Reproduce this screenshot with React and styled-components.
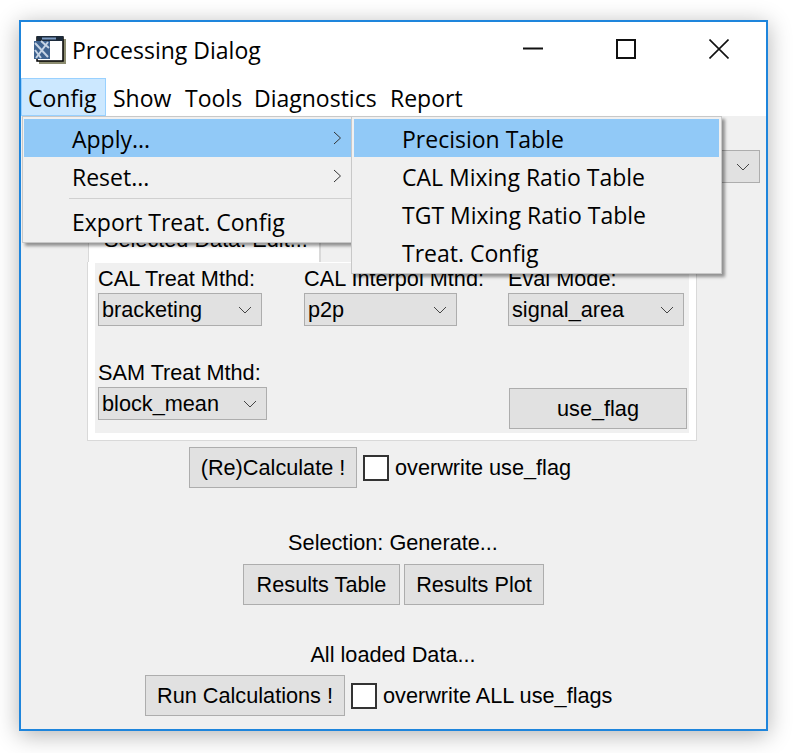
import styled, { createGlobalStyle } from 'styled-components';

const GlobalStyle = createGlobalStyle`
  html, body {
    margin: 0;
    padding: 0;
    background: #fff;
    min-height: 753px;
  }

  body {
    overflow: hidden;
  }
`;

const Chevron = ({ size = 14 }) => (
  <ChevronSvg width={size} height={size} viewBox="0 0 14 14" fill="none" stroke="#444" strokeWidth="1">
    <path d="M1 4l6 6 6-6" />
  </ChevronSvg>
);

const ArrowRight = () => (
  <svg width="9" height="14" viewBox="0 0 9 14" fill="none" stroke="#333" strokeWidth="1" display="block">
    <path d="M1 1l6.500 6-6.500 6" />
  </svg>
);

const AppIcon = () => (
  <svg width="32" height="28" viewBox="0 0 32 28">
    <rect x="5" y="3" width="27" height="25" fill="#8c8c70" />
    <rect x="3" y="1" width="26" height="24" fill="#fff" stroke="#000" strokeWidth="1.500" />
    <rect x="3" y="0" width="26" height="5" fill="#1c2a3a" />
    <rect x="8" y="1.500" width="14" height="2" fill="#7d9cc4" />
    <rect x="0" y="5" width="16" height="18" fill="#3f6390" />
    <path d="M1 7l13 14M14 6L2 22M7 5l8 7M1 14l6 8" stroke="#c5d3e4" strokeWidth="2" fill="none" />
  </svg>
);

const TitleBar = () => (
  <Title>
    <AppIcon />
    <TitleText>Processing Dialog</TitleText>
    <WinButtons>
      <WinButton>
        <svg width="20" height="20" viewBox="0 0 20 20"><path d="M0 9.500h20" stroke="#111" strokeWidth="2" /></svg>
      </WinButton>
      <WinButton>
        <svg width="20" height="20" viewBox="0 0 20 20"><rect x="1" y="1" width="18" height="18" fill="none" stroke="#111" strokeWidth="2" /></svg>
      </WinButton>
      <WinButton>
        <svg width="20" height="20" viewBox="0 0 20 20"><path d="M0.500 0.500l19 19M19.500 0.500l-19 19" stroke="#111" strokeWidth="1.600" fill="none" /></svg>
      </WinButton>
    </WinButtons>
  </Title>
);

const Menus = () => (
  <DropMenu>
    <MenuRow $active>
      Apply...
      <RowArrow><ArrowRight /></RowArrow>
    </MenuRow>
    <MenuRow>
      Reset...
      <RowArrow><ArrowRight /></RowArrow>
    </MenuRow>
    <MenuSep />
    <MenuRow>Export Treat. Config</MenuRow>
    <SubMenu>
      <SubRow $active>Precision Table</SubRow>
      <SubRow>CAL Mixing Ratio Table</SubRow>
      <SubRow>TGT Mixing Ratio Table</SubRow>
      <SubRow>Treat. Config</SubRow>
    </SubMenu>
  </DropMenu>
);

const Combo = ({ value, width }) => (
  <ComboBox $width={width}>
    {value}
    <Chevron />
  </ComboBox>
);

export default function App() {
  return (
    <>
      <GlobalStyle />
      <Window>
        <TitleBar />
        <MenuBar>
          <MenuItem $open $w={85} $pad={6}>Config</MenuItem>
          <MenuItem $w={78} $pad={6}>Show</MenuItem>
          <MenuItem $w={69} $pad={0}>Tools</MenuItem>
          <MenuItem $w={136} $pad={0}>Diagnostics</MenuItem>
          <MenuItem $w={90} $pad={0}>Report</MenuItem>
          <Menus />
        </MenuBar>
        <Body>
          <TopRow>
            <Combo value="" width={200} />
          </TopRow>
          <TabBar>
            <Tab $selected>Selected Data: Edit...</Tab>
            <Tab />
          </TabBar>
          <TabFrame>
            <TabInner>
              <Field $col="1" $row="1">
                <Label>CAL Treat Mthd:</Label>
                <Combo value="bracketing" width={164} />
              </Field>
              <Field $col="2" $row="1">
                <Label>CAL Interpol Mthd:</Label>
                <Combo value="p2p" width={153} />
              </Field>
              <Field $col="3" $row="1">
                <Label>Eval Mode:</Label>
                <Combo value="signal_area" width={176} />
              </Field>
              <Field $col="1" $row="2">
                <Label>SAM Treat Mthd:</Label>
                <Combo value="block_mean" width={169} />
              </Field>
              <UseFlag>use_flag</UseFlag>
            </TabInner>
          </TabFrame>
          <ActionRow $top={6} $left={168}>
            <Button $width={168}>(Re)Calculate !</Button>
            <Check />
            <span>overwrite use_flag</span>
          </ActionRow>
          <Caption $top={43}>Selection: Generate...</Caption>
          <CenterRow $top={9}>
            <Button $width={157}>Results Table</Button>
            <Button $width={140}>Results Plot</Button>
          </CenterRow>
          <Caption $top={38}>All loaded Data...</Caption>
          <ActionRow $top={8} $left={124}>
            <Button $width={200}>Run Calculations !</Button>
            <Check />
            <span>overwrite ALL use_flags</span>
          </ActionRow>
        </Body>
      </Window>
    </>
  );
}

const ChevronSvg = styled.svg`
  margin-left: auto;
  flex-shrink: 0;
`;

const Window = styled.div`
  box-sizing: border-box;
  width: 749px;
  height: 711px;
  margin: 20px 0 0 19px;
  border: 2px solid #1e85dc;
  background: #fff;
  display: flex;
  flex-direction: column;
  box-shadow: 0 4px 22px rgba(0, 0, 0, 0.3);
  font-family: 'Liberation Sans', Arial, sans-serif;
  color: #000;
`;

const Title = styled.div`
  height: 56px;
  display: flex;
  align-items: center;
  padding-left: 13px;
  flex-shrink: 0;
`;

const TitleText = styled.div`
  font-family: 'Open Sans', 'Noto Sans', sans-serif;
  font-size: 23px;
  margin-left: 6px;
`;

const WinButtons = styled.div`
  margin-left: auto;
  display: flex;
  margin-right: 37px;
  gap: 73px;
  margin-top: -2px;
`;

const WinButton = styled.div`
  width: 20px;
  height: 20px;
`;

const MenuBar = styled.div`
  position: relative;
  height: 38px;
  display: flex;
  flex-shrink: 0;
  padding-left: 0;
  font-family: 'Open Sans', 'Noto Sans', sans-serif;
  font-size: 23px;
`;

const MenuItem = styled.div`
  box-sizing: border-box;
  width: ${(p) => p.$w}px;
  padding-left: ${(p) => p.$pad}px;
  line-height: 39px;
  border: 1px solid ${(p) => (p.$open ? '#99d1ff' : 'transparent')};
  background: ${(p) => (p.$open ? '#cce8ff' : 'transparent')};
`;

const DropMenu = styled.div`
  position: absolute;
  top: 38px;
  left: 1px;
  box-sizing: border-box;
  width: 331px;
  height: 127px;
  padding: 2px 1px;
  background: #f0f0f0;
  border: 1px solid #c8c8c8;
  box-shadow: 3px 3px 3px rgba(0, 0, 0, 0.4);
  z-index: 5;
`;

const MenuRow = styled.div`
  position: relative;
  height: 38px;
  line-height: 40px;
  padding-left: 48px;
  background: ${(p) => (p.$active ? '#91c9f7' : 'transparent')};
`;

const RowArrow = styled.span`
  position: absolute;
  right: 9px;
  top: 12px;
  display: flex;
`;

const MenuSep = styled.div`
  height: 1px;
  margin: 3px 0 3px 45px;
  background: #d0d0d0;
`;

const SubMenu = styled.div`
  position: absolute;
  top: -1px;
  left: 328px;
  box-sizing: border-box;
  width: 371px;
  height: 158px;
  padding: 2px;
  background: #f0f0f0;
  border: 1px solid #c8c8c8;
  box-shadow: 3px 3px 3px rgba(0, 0, 0, 0.4);
`;

const SubRow = styled.div`
  height: 38px;
  line-height: 41px;
  padding-left: 48px;
  background: ${(p) => (p.$active ? '#91c9f7' : 'transparent')};
`;

const Body = styled.div`
  flex: 1;
  background: #f0f0f0;
  display: flex;
  flex-direction: column;
  font-size: 21.7px;
  min-height: 0;
`;

const TopRow = styled.div`
  display: flex;
  justify-content: flex-end;
  padding: 34px 6px 0 0;
`;

const ComboBox = styled.div`
  box-sizing: border-box;
  width: ${(p) => p.$width}px;
  height: 33px;
  padding: 0 9px 0 3px;
  background: #e1e1e1;
  border: 1px solid #adadad;
  display: flex;
  align-items: center;
`;

const TabBar = styled.div`
  display: flex;
  margin: 45px 0 0 67px;
  height: 34px;
  align-items: flex-end;
`;

const Tab = styled.div`
  box-sizing: border-box;
  height: ${(p) => (p.$selected ? 34 : 30)}px;
  width: ${(p) => (p.$selected ? 232 : 60)}px;
  padding: 0 0 0 15px;
  line-height: 21px;
  background: ${(p) => (p.$selected ? '#fff' : '#f0f0f0')};
  border: 1px solid #d9d9d9;
  border-bottom: none;
`;

const TabFrame = styled.div`
  box-sizing: border-box;
  width: 610px;
  margin-left: 66px;
  padding: 1px 7px 7px 7px;
  background: #fff;
  border: 1px solid #d9d9d9;
  border-top: none;
`;

const TabInner = styled.div`
  box-sizing: border-box;
  height: 170px;
  padding: 0 3px 5px;
  background: #f0f0f0;
  display: grid;
  grid-template-columns: 206px 204px 1fr;
  grid-template-rows: 63px 1fr;
  row-gap: 31px;
`;

const Field = styled.div`
  grid-column: ${(p) => p.$col};
  grid-row: ${(p) => p.$row};
  display: flex;
  flex-direction: column;
  align-items: flex-start;
  gap: 1px;
`;

const Label = styled.div`
  line-height: 27px;
  padding-top: 2px;
`;

const UseFlag = styled.div`
  grid-column: 3;
  grid-row: 2;
  box-sizing: border-box;
  align-self: end;
  width: 178px;
  height: 41px;
  margin: 0 0 -1px 1px;
  background: #e1e1e1;
  border: 1px solid #adadad;
  display: flex;
  align-items: center;
  justify-content: center;
`;

const Button = styled.div`
  box-sizing: border-box;
  width: ${(p) => p.$width}px;
  height: 41px;
  background: #e1e1e1;
  border: 1px solid #adadad;
  display: flex;
  align-items: center;
  justify-content: center;
`;

const Check = styled.div`
  box-sizing: border-box;
  width: 26px;
  height: 26px;
  background: #fff;
  border: 2px solid #333;
  margin: 0 6px;
`;

const ActionRow = styled.div`
  display: flex;
  align-items: center;
  margin-top: ${(p) => p.$top}px;
  margin-left: ${(p) => p.$left}px;
`;

const Caption = styled.div`
  text-align: center;
  margin-top: ${(p) => p.$top}px;
  margin-right: 1px;
  line-height: 24px;
`;

const CenterRow = styled.div`
  display: flex;
  justify-content: center;
  gap: 4px;
  margin-top: ${(p) => p.$top}px;
`;
